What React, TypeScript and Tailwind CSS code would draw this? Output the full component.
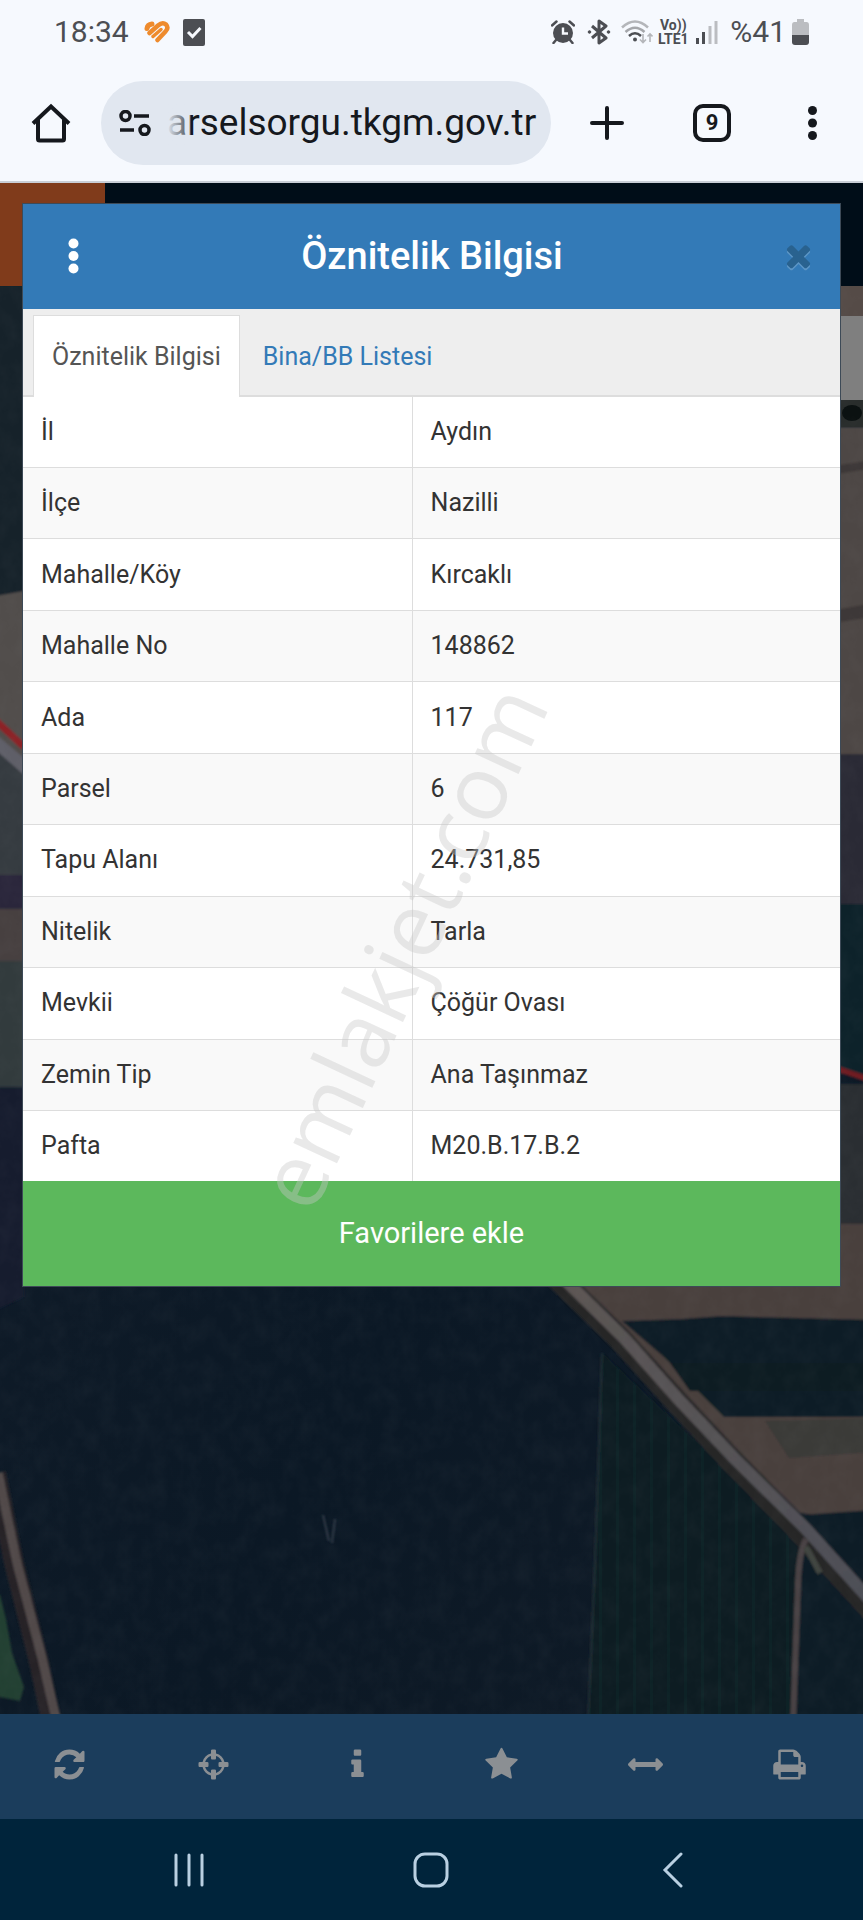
import { useState } from "react";
import type { ReactNode } from "react";

const rows = [
  ["İl", "Aydın"],
  ["İlçe", "Nazilli"],
  ["Mahalle/Köy", "Kırcaklı"],
  ["Mahalle No", "148862"],
  ["Ada", "117"],
  ["Parsel", "6"],
  ["Tapu Alanı", "24.731,85"],
  ["Nitelik", "Tarla"],
  ["Mevkii", "Çöğür Ovası"],
  ["Zemin Tip", "Ana Taşınmaz"],
  ["Pafta", "M20.B.17.B.2"],
];

const tabs = ["Öznitelik Bilgisi", "Bina/BB Listesi"];

const tools = [
  {
    label: "Yenile",
    path: "M1639 1056q0 5-1 7-64 268-268 434.5t-478 166.5q-146 0-282.5-55t-243.5-157l-129 129q-19 19-45 19t-45-19-19-45v-448q0-26 19-45t45-19h448q26 0 45 19t19 45-19 45l-137 137q71 66 161 102t187 36q134 0 250-65t186-179q11-17 53-117 8-23 30-23h192q13 0 22.5 9.5t9.5 22.5zm25-800v448q0 26-19 45t-45 19h-448q-26 0-45-19t-19-45 19-45l138-138q-148-137-349-137-134 0-250 65t-186 179q-11 17-53 117-8 23-30 23h-199q-13 0-22.5-9.5t-9.5-22.5v-7q65-268 270-434.5t480-166.5q146 0 284 55.5t245 156.5l130-129q19-19 45-19t45 19 19 45z",
  },
  {
    label: "Konum",
    path: "M1325 1024h-109q-26 0-45-19t-19-45v-128q0-26 19-45t45-19h109q-32-108-112.5-188.5t-188.5-112.5v109q0 26-19 45t-45 19h-128q-26 0-45-19t-19-45v-109q-108 32-188.5 112.5t-112.5 188.5h109q26 0 45 19t19 45v128q0 26-19 45t-45 19h-109q32 108 112.5 188.5t188.5 112.5v-109q0-26 19-45t45-19h128q26 0 45 19t19 45v109q108-32 188.5-112.5t112.5-188.5zm339-192v128q0 26-19 45t-45 19h-143q-37 161-154.5 278.5t-278.5 154.5v143q0 26-19 45t-45 19h-128q-26 0-45-19t-19-45v-143q-161-37-278.5-154.5t-154.5-278.5h-143q-26 0-45-19t-19-45v-128q0-26 19-45t45-19h143q37-161 154.5-278.5t278.5-154.5v-143q0-26 19-45t45-19h128q26 0 45 19t19 45v143q161 37 278.5 154.5t154.5 278.5h143q26 0 45 19t19 45z",
  },
  {
    label: "Bilgi",
    path: "M1216 1344v128q0 26-19 45t-45 19h-512q-26 0-45-19t-19-45v-128q0-26 19-45t45-19h64v-384h-64q-26 0-45-19t-19-45v-128q0-26 19-45t45-19h384q26 0 45 19t19 45v576h64q26 0 45 19t19 45zm-128-1152v192q0 26-19 45t-45 19h-256q-26 0-45-19t-19-45v-192q0-26 19-45t45-19h256q26 0 45 19t19 45z",
  },
  {
    label: "Favoriler",
    path: "M1728 647q0 22-26 48l-363 354 86 500q1 7 1 20 0 21-10.5 35.5t-30.5 14.5q-19 0-40-12l-449-236-449 236q-22 12-40 12-21 0-31.5-14.5t-10.5-35.5q0-6 2-20l86-500-364-354q-25-27-25-48 0-37 56-46l502-73 225-455q19-41 49-41t49 41l225 455 502 73q56 9 56 46z",
  },
  {
    label: "Ölçüm",
    path: "M1792 896q0 26-19 45l-256 256q-19 19-45 19t-45-19-19-45v-128h-1024v128q0 26-19 45t-45 19-45-19l-256-256q-19-19-19-45t19-45l256-256q19-19 45-19t45 19 19 45v128h1024v-128q0-26 19-45t45-19 45 19l256 256q19 19 19 45z",
  },
  {
    label: "Yazdır",
    path: "M448 1536h896v-256h-896v256zm0-640h896v-384h-160q-40 0-68-28t-28-68v-160h-640v640zm1152 64q0-26-19-45t-45-19-45 19-19 45 19 45 45 19 45-19 19-45zm128 0v416q0 13-9.5 22.5t-22.5 9.5h-224v160q0 40-28 68t-68 28h-960q-40 0-68-28t-28-68v-160h-224q-13 0-22.5-9.5t-9.5-22.5v-416q0-79 56.5-135.5t135.5-56.5h64v-544q0-40 28-68t68-28h672q40 0 88 20t76 48l152 152q28 28 48 76t20 88v256h64q79 0 135.5 56.5t56.5 135.5z",
  },
];

const StatusBar = () => (
  <div className="flex h-16 items-center justify-between px-[54px] text-[#4c4e53]">
    <div className="flex items-center">
      <span className="text-[30px] leading-8">18:34</span>
      <svg className="ml-3.5 h-6 w-7" viewBox="0 0 28 24" fill="none" stroke="#ee8b2d" strokeLinecap="round" strokeLinejoin="round">
        <path d="M4 8.500Q4.500 4.500 9 4" strokeWidth="5" />
        <path d="M6.500 13L15 5.500Q19.500 1.500 23 4.500Q26 8 22.500 11.500L14.500 20" strokeWidth="4.500" />
        <path d="M10 16.500L18 9.500" strokeWidth="3.500" />
      </svg>
      <svg className="ml-3 h-[27px] w-[22px]" viewBox="0 0 22 27">
        <rect width="22" height="27" rx="2" fill="#4c4e53" />
        <path d="M5 13l4.500 4.500L17.500 9" fill="none" stroke="#f6f9fe" strokeWidth="3" />
      </svg>
    </div>

    <div className="flex items-center">
      {/* Alarm */}
      <svg className="h-6 w-6" viewBox="0 0 24 24">
        <circle cx="12" cy="13" r="10" fill="currentColor" />
        <path d="M1 5.500L5.500 1.500M23 5.500L18.500 1.500M5 20l-2.500 3M19 20l2.500 3" stroke="currentColor" strokeWidth="2.500" strokeLinecap="round" />
        <path d="M12 7.500v6h5" fill="none" stroke="#f6f9fe" strokeWidth="2.400" />
      </svg>
      {/* Bluetooth */}
      <svg className="ml-3 h-[26px] w-6" viewBox="0 0 24 26" fill="none" stroke="currentColor" strokeWidth="3">
        <path d="M5 7l14 12-7 5V2L19 7 5 19" strokeLinejoin="round" />
        <circle cx="2.500" cy="13" r="1.300" fill="currentColor" strokeWidth="1" />
        <circle cx="21.500" cy="13" r="1.300" fill="currentColor" strokeWidth="1" />
      </svg>
      {/* Wi-Fi */}
      <svg className="ml-2.5 h-[26px] w-8" viewBox="0 0 32 26" fill="none" strokeWidth="2.500">
        <path d="M1 8.500Q14 -3.500 27 8.500" stroke="#b4b6ba" />
        <path d="M4.500 13Q14 4.500 23.500 13" stroke="#a5a7ab" />
        <path d="M8 17Q14 11.500 20 17" stroke="#4c4e53" />
        <circle cx="14" cy="20.500" r="2" fill="#4c4e53" />
        <path d="M22 15v8M19 20.500l3 3 3-3M29 23v-8M26.500 17.500L29 15l2.500 2.500" stroke="#b4b6ba" strokeWidth="1.600" />
      </svg>
      <div className="ml-1 w-8 text-center text-[14px] font-bold leading-[14px]">
        <div>Vo))</div>
        <div>LTE1</div>
      </div>
      {/* Signal */}
      <svg className="ml-1.5 h-6 w-[23px]" viewBox="0 0 23 24">
        <path d="M1 18h3v6H1zM7 12h3v12H7z" fill="#4c4e53" />
        <path d="M13.500 6h3v18h-3zM19.500 1h3v23h-3z" fill="#bbbdc1" />
      </svg>
      <span className="ml-3 text-[30px] leading-8">%41</span>
      <svg className="ml-1.5 h-[26px] w-[17px]" viewBox="0 0 17 26">
        <path d="M5 0h7v3h2.500Q17 3 17 6v10H0V6Q0 3 2.500 3H5z" fill="#bbbdc1" />
        <path d="M0 16h17v7q0 3-3 3H3q-3 0-3-3z" fill="#4c4e53" />
      </svg>
    </div>
  </div>
);

const AddressBar = () => (
  <div className="flex items-center pt-[17px] text-[#15181d]">
    <button aria-label="Ana sayfa" className="flex w-[101px] shrink-0 justify-center">
      <svg className="h-10 w-10" viewBox="0 0 40 40" fill="none" stroke="currentColor" strokeWidth="4">
        <path d="M2 20.500L20 3.500l18 17" strokeLinejoin="miter" />
        <path d="M7 16v20q0 1.500 1.500 1.500h23q1.500 0 1.500-1.500V16" />
      </svg>
    </button>
    <div className="flex h-[84px] min-w-0 flex-1 items-center rounded-full bg-[#e1e7f0] pl-[18px] pr-2">
      <svg className="h-[26px] w-8 shrink-0" viewBox="0 0 32 26" fill="none" stroke="currentColor" strokeWidth="3.500">
        <circle cx="6.500" cy="6" r="4.500" />
        <path d="M15 6h15M1 20h14" />
        <circle cx="25.500" cy="20" r="4.500" />
      </svg>
      <div className="relative ml-4 min-w-0 flex-1">
        <input
          aria-label="Adres"
          readOnly
          value="arselsorgu.tkgm.gov.tr"
          className="w-full bg-transparent text-[37px] leading-[44px] outline-none"
        />
        {/* The scrolled-off part of the address fades out */}
        <div className="pointer-events-none absolute inset-y-0 left-0 w-6 bg-linear-to-r from-[#e1e7f0] to-[#e1e7f0]/20" />
      </div>
    </div>
    <button aria-label="Yeni sekme" className="flex w-28 shrink-0 justify-center">
      <svg className="h-[34px] w-[34px]" viewBox="0 0 34 34" stroke="currentColor" strokeWidth="4" strokeLinecap="round">
        <path d="M17 2v30M2 17h30" />
      </svg>
    </button>
    <button aria-label="Sekmeler" className="flex w-[98px] shrink-0 justify-center">
      <span className="flex h-[38px] w-[38px] items-center justify-center rounded-[10px] border-4 border-current text-[22px] font-bold leading-6">
        9
      </span>
    </button>
    <button aria-label="Menü" className="flex w-[102px] shrink-0 justify-center">
      <svg className="h-[34px] w-[9px]" viewBox="0 0 9 34" fill="currentColor">
        <circle cx="4.500" cy="4.500" r="4.500" />
        <circle cx="4.500" cy="17" r="4.500" />
        <circle cx="4.500" cy="29.500" r="4.500" />
      </svg>
    </button>
  </div>
);

// Dimmed aerial view that lies behind the dialog
const Aerial = () => (
  <svg className="absolute inset-0 h-full w-full" viewBox="0 0 863 1531" preserveAspectRatio="none" aria-hidden="true">
    <defs>
      <linearGradient id="field" x1="0" y1="0" x2="1" y2="1">
        <stop offset="0" stopColor="#131e2b" />
        <stop offset="0.6" stopColor="#0b1825" />
        <stop offset="1" stopColor="#101b27" />
      </linearGradient>
      <linearGradient id="road" x1="0" y1="0" x2="1" y2="1">
        <stop offset="0" stopColor="#5c5553" />
        <stop offset="1" stopColor="#4d4f57" />
      </linearGradient>
      <pattern id="furrow" width="17" height="40" patternUnits="userSpaceOnUse">
        <rect width="17" height="40" fill="#0a1d24" />
        <rect x="4" width="3" height="40" fill="#092028" />
        <rect x="12" width="2" height="40" fill="#081a21" />
      </pattern>
      <filter id="soften" x="-0.05" y="-0.05" width="1.1" height="1.1">
        <feGaussianBlur stdDeviation="1" />
      </filter>
      <filter id="grain" x="0" y="0" width="1" height="1">
        <feTurbulence type="fractalNoise" baseFrequency="0.06 0.05" numOctaves="4" seed="4" />
        <feColorMatrix values="0 0 0 0 0.4  0 0 0 0 0.4  0 0 0 0 0.42  0.5 0 0 0 -0.17" />
      </filter>
    </defs>
    <rect width="863" height="1531" fill="url(#field)" />

    <g filter="url(#soften)">
      {/* West edge */}
      <rect x="-10" y="103" width="34" height="310" fill="#14212c" />
      <path d="M-10 414L24 408V620H-10z" fill="#514d4b" />
      <path d="M-10 546L24 575V625L-10 594z" fill="#5f5f68" />
      <path d="M-10 562L24 592V700H-10z" fill="#343a3f" />
      <path d="M-10 532L24 564" stroke="#8c2227" strokeWidth="7" />
      <rect x="-10" y="692" width="34" height="34" fill="#29263a" />
      <rect x="-10" y="726" width="34" height="76" fill="#47413f" />
      <rect x="-10" y="778" width="34" height="126" fill="#303a3d" />
      <path d="M-10 904h34v210L-10 1130z" fill="#141f2e" />

      {/* East edge */}
      <rect x="820" y="244" width="53" height="327" fill="#4e4744" />
      <path d="M820 285l53-8v8l-53 9zM820 430l53-10v14l-53 8z" fill="#3c3938" />
      <rect x="820" y="571" width="53" height="150" fill="#2b2934" />
      <rect x="820" y="721" width="53" height="170" fill="#0c242b" />
      <path d="M820 880L873 898" stroke="#6f1e24" strokeWidth="6" />
      <rect x="820" y="901" width="53" height="140" fill="#2b2d33" />
      <rect x="820" y="1041" width="53" height="70" fill="#483f3c" />

      {/* Fields on both sides of the road */}
      <path d="M560 1090H873V1340L800 1330z" fill="#483f3c" />
      <path d="M622 1138l60-2 40-3 151 4v97H724l-60-60z" fill="#111d28" />
      <path d="M670 1180h203v28H690z" fill="#0b1b23" />
      <path d="M765 1238l108-3v34l-84 6z" fill="#3b3a37" />
      <path d="M800 1332l73-5V1541H790z" fill="#101b25" />
      <path d="M602 1170L800 1355L792 1541H588z" fill="url(#furrow)" />
      <path d="M602 1170L595 1380L588 1541" fill="none" stroke="#222e34" strokeWidth="2" />

      {/* Roads */}
      <path d="M552 1090L620 1156L676 1218L730 1276L800 1348L873 1428" fill="none" stroke="#262528" strokeWidth="24" />
      <path d="M558 1090L625 1156L680 1218L735 1276L805 1345L880 1428" fill="none" stroke="url(#road)" strokeWidth="12" />
      <path d="M806 1356Q799 1370 798 1400L793 1541" fill="none" stroke="#4a4344" strokeWidth="6" />
      <path d="M806 1364l14 26" stroke="#41453f" strokeWidth="6" />
      <path d="M-4 1290L14 1380L38 1475L52 1540" fill="none" stroke="#252327" strokeWidth="20" />
      <path d="M-2 1290L17 1380L42 1475L57 1540" fill="none" stroke="#51494a" strokeWidth="9" />
      <path d="M-10 1412h10l6 24 6 34 12 34-4 14-30-6z" fill="#244033" />
      <path d="M323 1332l6 26m6-22l-3 24" stroke="#303b46" strokeWidth="2" />
    </g>

    {/* Map control strip */}
    <rect x="820" y="103" width="43" height="30" fill="#554b47" />
    <rect x="820" y="217" width="43" height="27" fill="#292d2c" />
    <ellipse cx="852" cy="230" rx="10" ry="8" fill="#0b1111" />

    <rect width="863" height="1531" filter="url(#grain)" opacity="0.15" />
    <rect x="820" y="133" width="43" height="84" fill="#7f7f7f" />
  </svg>
);

const Toolbar = () => (
  <div className="grid h-[105px] grid-cols-6 bg-[#1b3d5c] text-[#8b8f93]">
    {tools.map((tool) => (
      <button key={tool.label} aria-label={tool.label} className="flex items-center justify-center pb-1 pr-1">
        <svg className="h-[35px] w-[35px]" viewBox="0 0 1792 1792" fill="currentColor">
          <path d={tool.path} />
        </svg>
      </button>
    ))}
  </div>
);

const NavButton = ({ label, children }: { label: string; children: ReactNode }) => (
  <button aria-label={label} className="flex items-center justify-center">
    <svg className="h-9 w-9" viewBox="0 0 36 36" fill="none" stroke="#b9d0e2" strokeWidth="3" strokeLinecap="round">
      {children}
    </svg>
  </button>
);

const Dialog = () => {
  const [active, setActive] = useState(0);

  return (
    <section className="relative mx-[22px] mt-5 border border-[#3d4a57] bg-white">
      <header className="flex h-[105px] items-center justify-between bg-[#337ab7] pb-0.5 pl-10 pr-6 text-white">
        <button aria-label="Seçenekler" className="flex w-5 justify-center">
          <svg className="h-9 w-[11px]" viewBox="0 0 11 36" fill="currentColor">
            <circle cx="5.500" cy="5.500" r="5" />
            <circle cx="5.500" cy="18" r="5" />
            <circle cx="5.500" cy="30.500" r="5" />
          </svg>
        </button>
        <h1 className="text-[38px] font-medium leading-10">Öznitelik Bilgisi</h1>
        <button aria-label="Kapat" className="text-[#29628f]">
          <svg className="h-[35px] w-[35px] drop-shadow-[0_2px_0_#5c95c5]" viewBox="0 0 1792 1792" fill="currentColor">
            <path d="M1490 1322q0 40-28 68l-136 136q-28 28-68 28t-68-28l-294-294-294 294q-28 28-68 28t-68-28l-136-136q-28-28-28-68t28-68l294-294-294-294q-28-28-28-68t28-68l136-136q28-28 68-28t68 28l294 294 294-294q28-28 68-28t68 28l136 136q28 28 28 68t-28 68l-294 294 294 294q28 28 28 68z" />
          </svg>
        </button>
      </header>

      <div role="tablist" className="flex h-[88px] border-b-2 border-[#dddddd] bg-[#eeeeee] pl-2.5 pt-1.5">
        {tabs.map((tab, i) => (
          <button
            key={tab}
            role="tab"
            aria-selected={i === active}
            onClick={() => setActive(i)}
            className={
              i === active
                ? "-mb-0.5 border border-b-0 border-[#dddddd] bg-white px-[18px] text-[25px] text-[#555555]"
                : "-mb-0.5 border border-b-0 border-transparent px-[22px] text-[25px] text-[#337ab7]"
            }
          >
            {tab}
          </button>
        ))}
      </div>

      <table className="h-[784px] w-full table-fixed border-collapse text-left text-[25px] leading-8 text-[#333333]">
        <colgroup>
          <col className="w-10/21" />
          <col />
        </colgroup>
        <tbody>
          {rows.map(([name, value]) => (
            <tr key={name} className="border-b border-[#dddddd] last:border-b-0 even:bg-[#f9f9f9]">
              <th scope="row" className="border-r border-[#dddddd] px-[18px] font-normal">{name}</th>
              <td className="px-[18px]">{value}</td>
            </tr>
          ))}
        </tbody>
      </table>

      <button className="block h-[105px] w-full bg-[#5cb85c] text-[29px] text-white">Favorilere ekle</button>

      {/* Watermark */}
      <div className="pointer-events-none absolute inset-x-0 top-[700px] flex justify-center pr-16">
        <span className="-rotate-65 font-['Open_Sans'] text-[90px] leading-[84px] text-[#c9c9c9]/40">emlakjet.com</span>
      </div>
    </section>
  );
};

export default function App() {
  return (
    <div className="flex min-h-screen flex-col bg-[#00243b] font-['Roboto',sans-serif]">
      <div className="h-[183px] border-b-2 border-[#c9ced6] bg-[#f6f9fe]">
        <StatusBar />
        <AddressBar />
      </div>

      <main className="relative flex-1 overflow-hidden bg-[#0d1925]">
        <Aerial />
        <div className="absolute inset-x-0 top-0 h-[103px] bg-[#000d18]">
          <div className="h-full w-[105px] bg-[#803b1b]" />
        </div>
        <Dialog />
      </main>

      <Toolbar />
      <nav className="grid h-[101px] grid-cols-3 bg-[#00243b] px-[68px]">
        <NavButton label="Son uygulamalar">
          <path d="M5 3v30M18 3v30M31 3v30" />
        </NavButton>
        <NavButton label="Ana ekran">
          <rect x="2" y="2" width="32" height="32" rx="10" />
        </NavButton>
        <NavButton label="Geri">
          <path d="M25 2L9 18l16 16" />
        </NavButton>
      </nav>
    </div>
  );
}
